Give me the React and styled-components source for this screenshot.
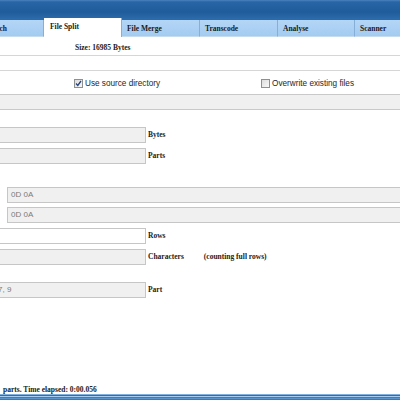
import React from 'react';
import styled, { createGlobalStyle } from 'styled-components';

const GlobalStyle = createGlobalStyle`
  html, body {
    margin: 0;
    padding: 0;
    background: #ffffff;
  }
  body {
    width: 400px;
    height: 400px;
    overflow: hidden;
  }
`;

const Window = styled.div`
  display: flex;
  flex-direction: column;
  width: 400px;
  height: 400px;
  overflow: hidden;
  background: #ffffff;
`;

const TitleBar = styled.div`
  height: 18px;
  flex: none;
  background: linear-gradient(#4a82bd 0px, #2865a6 2px, #1f5c9c 12px, #2a68a8 18px);
`;

const TabStrip = styled.div`
  display: flex;
  align-items: flex-end;
  height: 19px;
  flex: none;
  background: #2b6aab;
  margin-left: -34px;
`;

const Tab = styled.div`
  flex: none;
  width: ${(p) => p.$w}px;
  height: ${(p) => (p.$active ? 19 : 17)}px;
  box-sizing: border-box;
  padding: ${(p) => (p.$active ? '4px 0 0 6px' : '4px 0 0 5px')};
  background: ${(p) => (p.$active ? '#ffffff' : 'linear-gradient(#b4d6f6, #a3cbf1)')};
  border-right: 1px solid #86afd8;
  border-bottom: ${(p) => (p.$active ? 'none' : '1px solid #c8dcf0')};
  font-family: 'Liberation Serif', serif;
  font-weight: bold;
  font-size: 7.5px;
  color: #1a1a1a;
  white-space: nowrap;
`;

const Content = styled.div`
  flex: 1;
  display: flex;
  flex-direction: column;
`;

const InfoRow = styled.div`
  height: 18px;
  box-sizing: border-box;
  padding: 6px 0 0 75px;
  font-family: 'Liberation Serif', serif;
  font-weight: bold;
  font-size: 7.5px;
  color: #222;
`;

const BlankField = styled.div`
  height: 14px;
  flex: none;
  border-top: 1px solid #d6d6d6;
  border-bottom: 1px solid #d6d6d6;
  background: #ffffff;
`;

const CheckRow = styled.div`
  display: flex;
  align-items: center;
  height: 22px;
  padding-top: 1px;
  flex: none;
`;

const CheckItem = styled.label`
  display: flex;
  align-items: center;
  gap: 2px;
  margin-left: ${(p) => p.$ml}px;
  font-family: 'Liberation Sans', Arial, sans-serif;
  font-size: 8.2px;
  color: #1e1e1e;
`;

const Box = styled.span`
  display: inline-flex;
  align-items: center;
  justify-content: center;
  width: 7px;
  height: 7px;
  border: 1px solid #8e8f8f;
  background: linear-gradient(135deg, #dcdcdc, #f8f8f8);
`;

const Field = styled.div`
  flex: none;
  box-sizing: border-box;
  height: 16px;
  width: ${(p) => (p.$wide ? 'auto' : '146px')};
  margin-left: ${(p) => (p.$wide ? '7px' : '0')};
  margin-right: ${(p) => (p.$wide ? '-2px' : '0')};
  ${(p) => (p.$wide ? 'flex: 1;' : '')}
  border: 1px solid #c6c6c6;
  border-left: ${(p) => (p.$wide ? '1px solid #c6c6c6' : 'none')};
  background: ${(p) => (p.$white ? '#ffffff' : '#f0f0f0')};
  padding: 2px 0 0 ${(p) => (p.$wide ? '3px' : '0')};
  font-family: 'Liberation Sans', Arial, sans-serif;
  font-size: 8px;
  color: #7a7a7a;
  white-space: nowrap;
  overflow: hidden;
`;

const FullBar = styled.div`
  height: 16px;
  flex: none;
  box-sizing: border-box;
  border-top: 1px solid #c9c9c9;
  border-bottom: 1px solid #c9c9c9;
  background: #f0f0f0;
`;

const Row = styled.div`
  display: flex;
  align-items: flex-start;
  flex: none;
  margin-top: ${(p) => p.$mt}px;
`;

const Label = styled.span`
  margin-left: 2px;
  padding-top: 3px;
  font-family: 'Liberation Serif', serif;
  font-weight: bold;
  font-size: 7.5px;
  color: #222;
  white-space: nowrap;
`;

const Note = styled(Label)`
  margin-left: 20px;
`;

const Spacer = styled.div`
  flex: 1;
`;

const Status = styled.div`
  display: flex;
  align-items: flex-end;
  height: 12px;
  flex: none;
  padding-left: 3px;
  font-family: 'Liberation Serif', serif;
  font-size: 7.5px;
  font-weight: bold;
  color: #222;
  white-space: nowrap;
`;

const BottomBar = styled.div`
  height: 6px;
  flex: none;
  background: linear-gradient(#7fb0e0 0px, #7fb0e0 1px, #2f6fb0 1px, #2f6fb0 2px, #a8cdf0 2px, #a8cdf0 3px, #3d7dbd 3px, #3d7dbd 4px, #6aa2d8 4px, #2c6aaa 6px);
`;

const Shift = styled.span`
  margin-left: -2px;
`;

function Check() {
  return (
    <svg width="7" height="7" viewBox="0 0 7 7">
      <path d="M1 3.5 L2.8 5.5 L6 1" fill="none" stroke="#26437a" strokeWidth="1.3" />
    </svg>
  );
}

const tabs = [
  { name: 'File Search', w: 78 },
  { name: 'File Split', w: 78, active: true },
  { name: 'File Merge', w: 78 },
  { name: 'Transcode', w: 78 },
  { name: 'Analyse', w: 77 },
  { name: 'Scanner', w: 78 },
];

export default function App() {
  return (
    <Window>
      <GlobalStyle />
      <TitleBar />
      <TabStrip>
        {tabs.map((t) => (
          <Tab key={t.name} $w={t.w} $active={t.active}>
            {t.name}
          </Tab>
        ))}
      </TabStrip>
      <Content>
        <InfoRow>Size: 16985 Bytes</InfoRow>
        <BlankField />
        <CheckRow>
          <CheckItem $ml={74}>
            <Box>
              <Check />
            </Box>
            Use source directory
          </CheckItem>
          <CheckItem $ml={101}>
            <Box />
            Overwrite existing files
          </CheckItem>
        </CheckRow>
        <FullBar />
        <Row $mt={17}>
          <Field />
          <Label>Bytes</Label>
        </Row>
        <Row $mt={5}>
          <Field />
          <Label>Parts</Label>
        </Row>
        <Row $mt={23}>
          <Field $wide>0D 0A</Field>
        </Row>
        <Row $mt={4}>
          <Field $wide>0D 0A</Field>
        </Row>
        <Row $mt={5}>
          <Field $white />
          <Label>Rows</Label>
        </Row>
        <Row $mt={5}>
          <Field />
          <Label>Characters</Label>
          <Note>(counting full rows)</Note>
        </Row>
        <Row $mt={17}>
          <Field>
            <Shift>7, 9</Shift>
          </Field>
          <Label>Part</Label>
        </Row>
        <Spacer />
        <Status>parts. Time elapsed: 0:00.056</Status>
      </Content>
      <BottomBar />
    </Window>
  );
}
